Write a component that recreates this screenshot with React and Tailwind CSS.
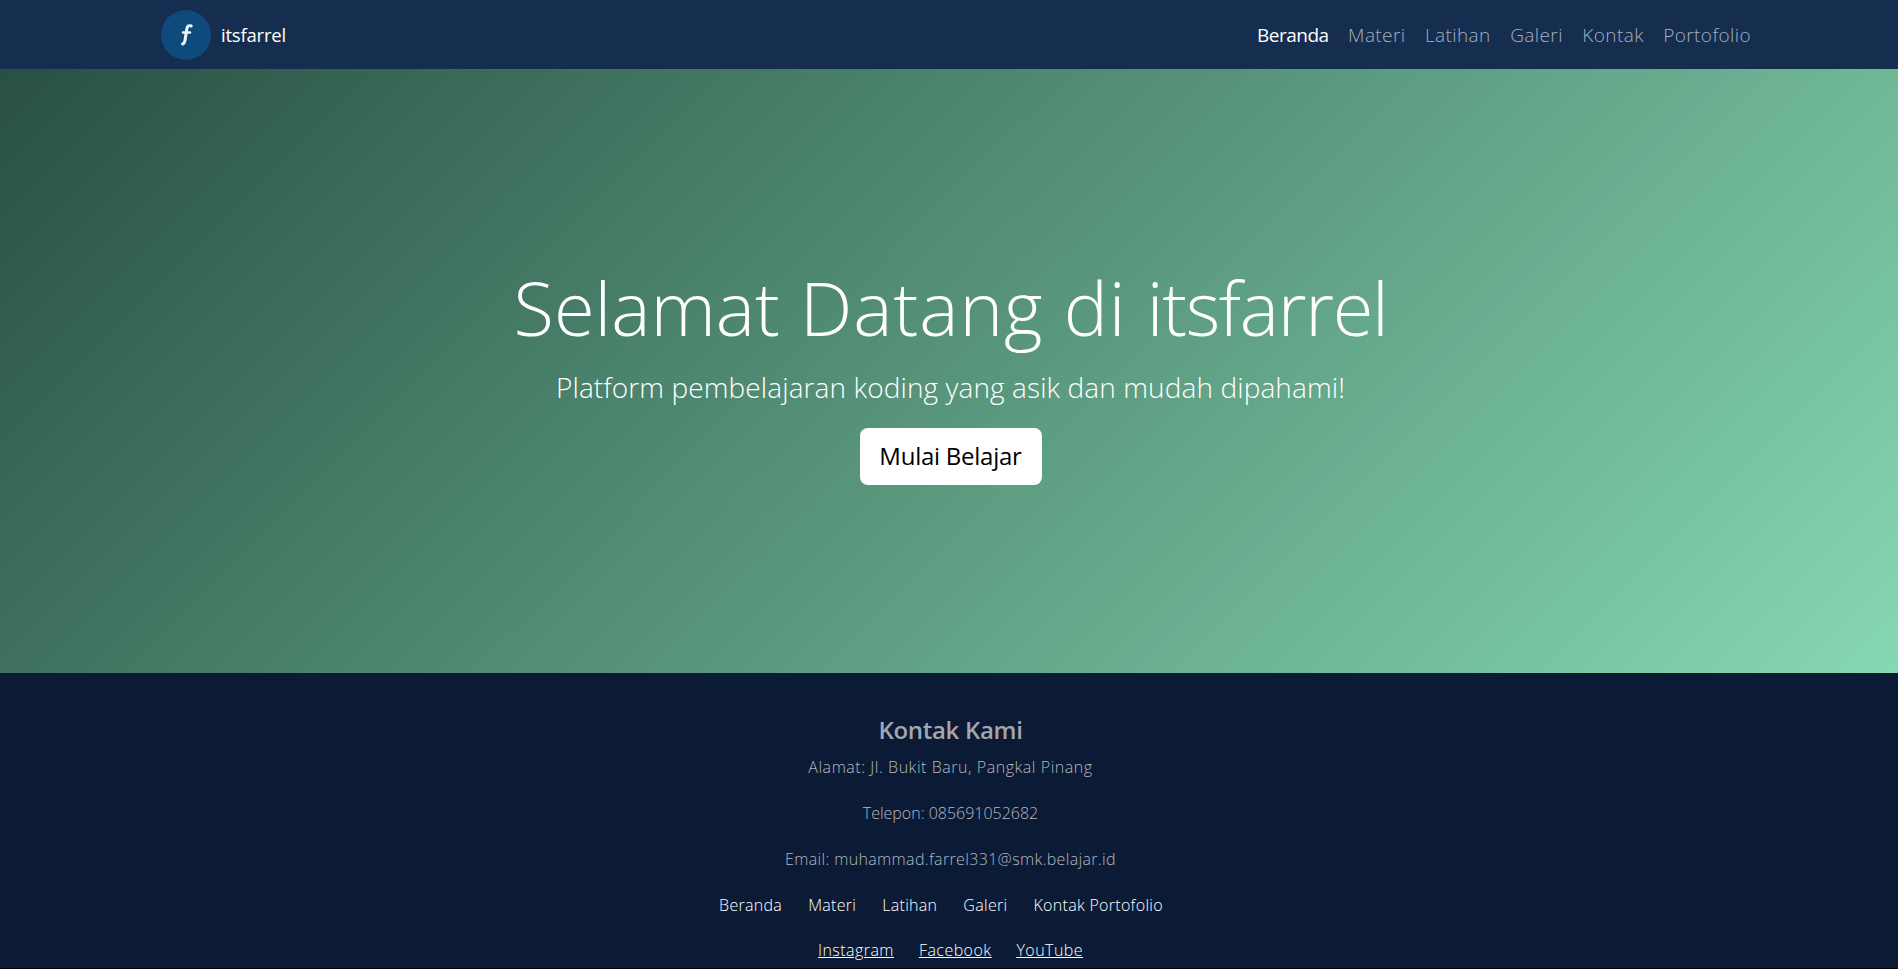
const nav = ["Materi", "Latihan", "Galeri", "Kontak", "Portofolio"];
export default function App() {
  return (
    <div className="min-h-[969px] flex flex-col bg-black font-['Open_Sans',sans-serif] text-white">
      <nav className="h-[69px] shrink-0 bg-[#152d4e] flex items-center justify-between pl-[161px] pr-[147px]">
        <div className="flex items-center gap-[10px]">
          <div className="w-[50px] h-[50px] rounded-full bg-[#0f4a7c] flex items-center justify-center">
            <svg width="16" height="24" viewBox="0 0 16 24" fill="none" stroke="#f1f5f9" strokeLinecap="round">
              <path d="M13.2 3C10.600 2 9.300 3.200 8.800 6L7 17.500C6.700 19.500 5.800 20.500 4.600 21" strokeWidth="3" />
              <path d="M5 9.500H12" strokeWidth="2.400" />
            </svg>
          </div>
          <span className="text-[18.5px] tracking-[-0.2px] font-normal pt-px">itsfarrel</span>
        </div>
        <div className="flex items-center gap-[19.5px] text-[19px] tracking-[0.4px] font-light pt-[2px]">
          <a className="text-white font-normal tracking-[-0.5px]">Beranda</a>
          {nav.map((n) => <a key={n} className="text-[#a5afc0]">{n}</a>)}
        </div>
      </nav>
      <main className="h-[604px] shrink-0 flex flex-col items-center bg-[linear-gradient(135deg,#285043,#86d8b2)] pt-[195px] pl-[3px]">
        <h1 className="text-[74px] leading-[1.2] font-light [word-spacing:1px]">Selamat <span className="tracking-[1px]">Datang</span> <span className="tracking-[1px]">di</span> <span className="tracking-[-1.3px]">itsfarrel</span></h1>
        <p className="text-[28px] leading-[1.5] font-light tracking-[0.1px] mt-[13px]">Platform pembelajaran koding yang asik dan mudah dipahami!</p>
        <button className="mt-[20px] w-[182px] h-[57px] rounded-[8px] bg-white text-black text-[24px] tracking-[-0.25px]">Mulai Belajar</button>
      </main>
      <footer className="h-[295px] shrink-0 bg-[#0b1b36] flex flex-col items-center pt-[43px] pl-[3px]">
        <h5 className="text-[24px] leading-[1.2] font-semibold text-[#a3a6ad] tracking-[-0.3px]">Kontak Kami</h5>
        <p className="text-[16px] leading-[24px] font-light text-[#b5b8bf] mt-[10px] tracking-[0.55px]">Alamat: Jl. Bukit Baru, Pangkal Pinang</p>
        <p className="text-[16px] leading-[24px] font-light text-[#b5b8bf] mt-[22px]">Telepon: 085691052682</p>
        <p className="text-[16px] leading-[24px] font-light text-[#b5b8bf] mt-[22px] tracking-[0.35px]">Email: muhammad.farrel331@smk.belajar.id</p>
        <div className="flex gap-[26px] text-[16px] leading-[24px] font-light mt-[22px] tracking-[0.3px] pr-[19px]">
          <a>Beranda</a><a>Materi</a><a>Latihan</a><a>Galeri</a><a>Kontak Portofolio</a>
        </div>
        <div className="flex gap-[25px] text-[16px] leading-[24px] font-light mt-[21px] underline tracking-[0.45px]">
          <a>Instagram</a><a>Facebook</a><a>YouTube</a>
        </div>
      </footer>
    </div>
  );
}
